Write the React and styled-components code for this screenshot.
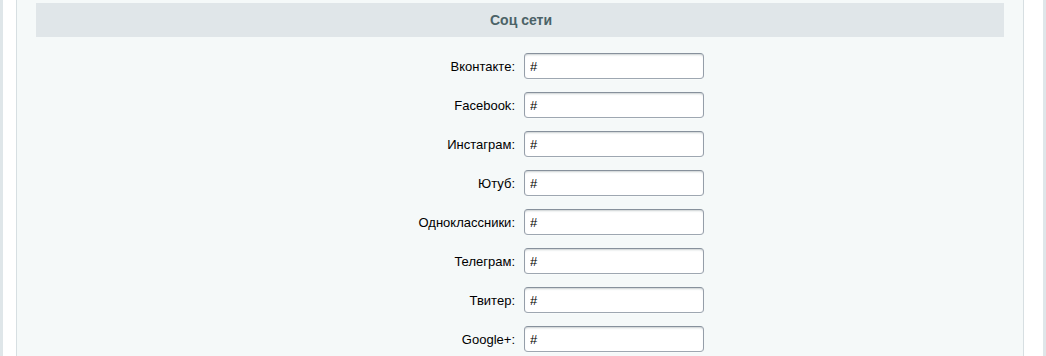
import React from "react";
import styled, { createGlobalStyle } from "styled-components";

const Global = createGlobalStyle`
  html, body { margin: 0; padding: 0; }
  body { background: #dfe6e9; font-family: "Liberation Sans", Arial, sans-serif; }
`;

const Page = styled.div`
  height: 356px;
  padding: 0 3px 0 3px;
  overflow: hidden;
`;

const Panel = styled.div`
  background: #ffffff;
  height: 100%;
  padding: 0 19px 0 13px;
`;

const Content = styled.div`
  height: 100%;
  background: #f5f9f9;
  border-left: 1px solid #d7dfe2;
  border-right: 1px solid #d7dfe2;
  padding: 3px 19px 0 19px;
  box-sizing: border-box;
`;

const Heading = styled.div`
  height: 34px;
  background: #e0e6e9;
  color: #4b6267;
  font-weight: bold;
  font-size: 14px;
  display: flex;
  align-items: center;
  justify-content: center;
  padding-left: 2px;
`;

const Form = styled.div`
  display: grid;
  grid-template-columns: 1fr 1fr;
  row-gap: 13px;
  padding-top: 16px;
`;

const Label = styled.label`
  font-size: 13px;
  color: #000;
  text-align: right;
  padding-right: 5px;
  display: flex;
  align-items: center;
  justify-content: flex-end;
  height: 26px;
`;

const Cell = styled.div`
  padding-left: 4px;
  display: flex;
  align-items: center;
`;

const Input = styled.input`
  box-sizing: border-box;
  width: 180px;
  height: 26px;
  margin: 0;
  padding: 0 5px;
  font-family: "Liberation Sans", Arial, sans-serif;
  font-size: 13px;
  color: #000;
  background: #fff;
  border: 1px solid;
  border-color: #87919c #959ea9 #9ea7b1 #959ea9;
  border-radius: 4px;
  box-shadow: 0 1px 0 0 rgba(255, 255, 255, 0.3), inset 0 2px 2px -1px rgba(180, 188, 191, 0.7);
  outline: none;
`;

const fields = [
  "Вконтакте",
  "Facebook",
  "Инстаграм",
  "Ютуб",
  "Одноклассники",
  "Телеграм",
  "Твитер",
  "Google+",
];

export default function App() {
  return (
    <>
      <Global />
      <Page>
        <Panel>
          <Content>
            <Heading>Соц сети</Heading>
            <Form>
              {fields.map((f) => (
                <React.Fragment key={f}>
                  <Label>{f}:</Label>
                  <Cell>
                    <Input defaultValue="#" />
                  </Cell>
                </React.Fragment>
              ))}
            </Form>
          </Content>
        </Panel>
      </Page>
    </>
  );
}
